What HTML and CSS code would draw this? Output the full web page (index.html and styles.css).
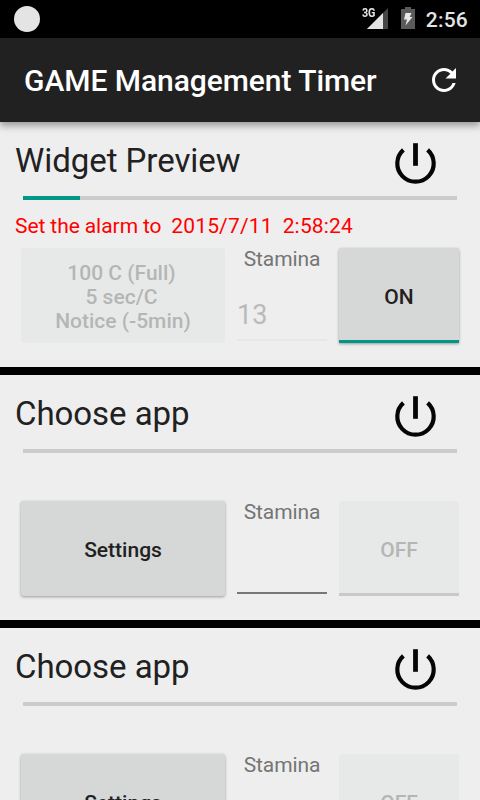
FILE: index.html
```html
<!DOCTYPE html>
<html lang="en">
<head>
<meta charset="utf-8">
<title>GAME Management Timer</title>
<link rel="stylesheet" href="styles.css">
</head>
<body>
<svg class="defs" width="0" height="0">
  <symbol id="power" viewBox="0 0 48 48">
    <path d="M12.4 11.9A18.2 18.2 0 1 0 36.6 11.9" fill="none" stroke="#050505" stroke-width="4.2"/><path d="M24.5 5.2V27.8" stroke="#050505" stroke-width="4.8"/>
  </symbol>
</svg>
<header class="status">
  <span class="dot"></span>
  <div class="indicators">
    <span class="network">3G</span>
    <svg class="signal" width="21" height="21" viewBox="0 0 21 21"><path d="M21 0V21H0z" fill="#474747"/><path d="M16 5V21H0z" fill="#e4e4e4"/></svg>
    <svg class="battery" width="14" height="22" viewBox="0 0 14 22"><path d="M4 0h6v2h4v20H0V2h4z" fill="#5a5a5a"/><path d="M4.5 6h6L8.7 10H11.5L4.5 18.5 6 12.5H3z" fill="#e8e8e8"/></svg>
    <span class="clock">2:56</span>
  </div>
</header>
<div class="appbar">
  <h1>GAME Management Timer</h1>
  <svg width="36" height="36" viewBox="0 0 24 24"><path fill="#fff" d="M17.65 6.35C16.2 4.9 14.21 4 12 4c-4.42 0-7.99 3.58-7.99 8s3.57 8 7.99 8c3.73 0 6.84-2.55 7.73-6h-2.08c-.82 2.33-3.04 4-5.65 4-3.31 0-6-2.69-6-6s2.69-6 6-6c1.66 0 3.14.69 4.22 1.78L13 11h7V4l-2.35 2.35z"/></svg>
</div>
<main>
  <section class="card">
    <div class="head"><h2>Widget Preview</h2><svg class="power" width="48" height="48"><use href="#power"/></svg></div>
    <div class="track"><div class="fill" style="width:13.1%"></div></div>
    <p class="alarm">Set the alarm to&nbsp; <span class="date">2015/7/11&nbsp; 2:58:24</span></p>
    <div class="controls">
      <button class="btn disabled" disabled><span class="rate">100 C (Full)</span><br><span class="rate">5 sec/C</span><br>Notice (-5min)</button>
      <div class="field off"><label>Stamina</label><div class="value">13</div></div>
      <button class="btn toggle on">ON</button>
    </div>
  </section>
  <section class="card">
    <div class="head"><h2>Choose app</h2><svg class="power" width="48" height="48"><use href="#power"/></svg></div>
    <div class="track"></div>
    <p class="alarm"></p>
    <div class="controls">
      <button class="btn">Settings</button>
      <div class="field"><label>Stamina</label><div class="value"></div></div>
      <button class="btn toggle disabled" disabled>OFF</button>
    </div>
  </section>
  <section class="card">
    <div class="head"><h2>Choose app</h2><svg class="power" width="48" height="48"><use href="#power"/></svg></div>
    <div class="track"></div>
    <p class="alarm"></p>
    <div class="controls">
      <button class="btn">Settings</button>
      <div class="field"><label>Stamina</label><div class="value"></div></div>
      <button class="btn toggle disabled" disabled>OFF</button>
    </div>
  </section>
</main>
</body>
</html>
```
FILE: styles.css
```css
* { box-sizing: border-box; }
html { height: 800px; overflow: hidden; }
body {
  margin: 0;
  height: 800px;
  overflow: hidden;
  display: flex;
  flex-direction: column;
  background: #000;
  color: #212121;
  font-family: Roboto, sans-serif;
  font-size: 21px;
}
h1, h2, p { margin: 0; }
.defs { position: absolute; }
.status {
  flex: none;
  height: 38px;
  display: flex;
  justify-content: space-between;
  padding: 6px 12px 0 14px;
  background: #000;
}
.dot { width: 26px; height: 26px; border-radius: 50%; background: #e4e4e4; }
.indicators { display: flex; color: #e4e4e4; }
.network { font-size: 12px; line-height: 15px; font-weight: 700; letter-spacing: -.3px; transform: scaleX(.9); transform-origin: left; margin-right: -10px; }
.signal { margin: 2px 13px 0 0; }
.battery { margin: 1px 11px 0 0; }
.clock { font-size: 21px; line-height: 28px; font-weight: 500; letter-spacing: .2px; }
.appbar {
  flex: none;
  position: relative;
  z-index: 1;
  height: 84px;
  display: flex;
  align-items: center;
  justify-content: space-between;
  padding: 0 18px 0 24px;
  background: #212121;
  box-shadow: 0 4px 7px rgba(0, 0, 0, .35);
}
h1 { color: #fff; font-size: 30px; line-height: 36px; font-weight: 500; letter-spacing: -.05px; padding-top: 2px; }
main { flex: 1; min-height: 0; overflow: hidden; display: flex; flex-direction: column; gap: 8px; }
.card { flex: none; height: 245px; background: #eee; }
.head {
  height: 74px;
  display: flex;
  justify-content: space-between;
  padding: 16px 41px 0 15px;
}
h2 { font-size: 33px; line-height: 45px; font-weight: 400; letter-spacing: -.05px; }
.power { filter: blur(.45px); }
.track { height: 4px; margin: 0 23px; background: #cbcbcb; }
.fill { height: 4px; background: #009688; }
.alarm { height: 48px; padding: 13px 15px 0; line-height: 26px; color: #f00; word-spacing: -.4px; }
.date { letter-spacing: .17px; }
.controls { display: flex; gap: 12px; padding-left: 21px; }
.btn {
  width: 204px;
  height: 95px;
  padding: 2px 0 0;
  border: 0;
  border-radius: 3px;
  background: #d6d7d7;
  color: #212121;
  font: 500 21px/24px Roboto, sans-serif;
  box-shadow: 0 1px 3px rgba(0, 0, 0, .36);
}
.btn.disabled { background: #e7e9e8; color: #b4b6b5; box-shadow: none; }
.rate { margin-right: 3px; }
.toggle { width: 120px; border-bottom: 3px solid #009688; border-radius: 3px 3px 0 0; padding-top: 5px; }
.btn.toggle.disabled { border-bottom-color: #c8caca; }
.field { width: 90px; height: 93px; display: flex; flex-direction: column; justify-content: space-between; border-bottom: 2px solid #777; }
label { text-align: center; line-height: 22px; color: #757575; letter-spacing: -.1px; }
.value { height: 45px; font-size: 27px; line-height: 43px; color: #bababa; }
.field.off { border-bottom-color: #e7e7e7; }
```
